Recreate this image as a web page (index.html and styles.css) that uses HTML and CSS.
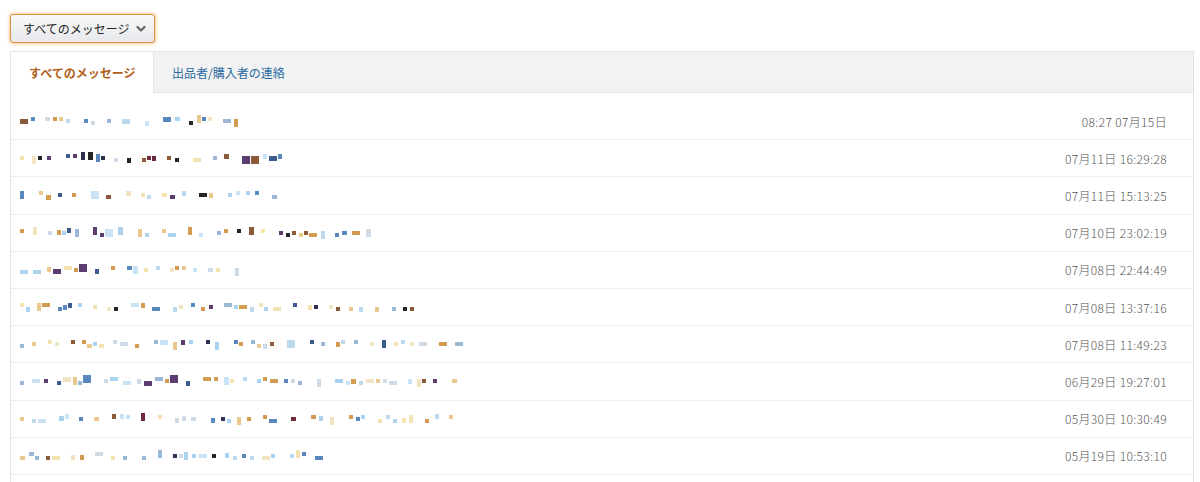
FILE: index.html
```html
<!DOCTYPE html>
<html lang="ja">
<head>
<meta charset="utf-8">
<link rel="stylesheet" href="styles.css">
</head>
<body>
<div class="page">
  <div class="toolbar">
    <button class="select-btn"><span class="select-label">すべてのメッセージ</span><svg class="chev" width="10" height="8" viewBox="0 0 10 8"><path d="M1.5 2 L5 5.5 L8.5 2" fill="none" stroke="#666" stroke-width="2.2" stroke-linecap="round" stroke-linejoin="round"/></svg></button>
  </div>
  <div class="panel">
    <div class="tabs">
      <div class="tab active">すべてのメッセージ</div>
      <div class="tab">出品者/購入者の連絡</div>
    </div>
    <div class="list">
      <div class="row"><div class="msg" data-w="230" data-seed="1"></div><div class="date">08:27 07月15日</div></div>
      <div class="row"><div class="msg" data-w="270" data-seed="2" data-dark="1"></div><div class="date">07月11日 16:29:28</div></div>
      <div class="row"><div class="msg" data-w="258" data-seed="3"></div><div class="date">07月11日 15:13:25</div></div>
      <div class="row"><div class="msg" data-w="355" data-seed="4"></div><div class="date">07月10日 23:02:19</div></div>
      <div class="row"><div class="msg" data-w="228" data-seed="5"></div><div class="date">07月08日 22:44:49</div></div>
      <div class="row"><div class="msg" data-w="400" data-seed="6"></div><div class="date">07月08日 13:37:16</div></div>
      <div class="row"><div class="msg" data-w="448" data-seed="7"></div><div class="date">07月08日 11:49:23</div></div>
      <div class="row"><div class="msg" data-w="440" data-seed="8"></div><div class="date">06月29日 19:27:01</div></div>
      <div class="row"><div class="msg" data-w="440" data-seed="9"></div><div class="date">05月30日 10:30:49</div></div>
      <div class="row"><div class="msg" data-w="310" data-seed="10"></div><div class="date">05月19日 10:53:10</div></div>
    </div>
  </div>
</div>
<script src="script.js"></script>
</body>
</html>
```

FILE: styles.css
```css
* { box-sizing: border-box; }
html, body { margin: 0; padding: 0; background: #fff; }
body { font-family: "Noto Sans CJK JP", "Liberation Sans", sans-serif; color: #333; }
.page { padding: 14px 6px 0 10px; }
.toolbar { display: flex; margin-bottom: 8px; }
.select-btn {
  display: flex; align-items: center; gap: 7px;
  height: 29px; width: 145px; padding: 0 0 0 12px;
  font-family: inherit; font-size: 12px; color: #222;
  background: linear-gradient(#f8f9fa, #e6e8eb);
  border: 1px solid #e0913f; border-radius: 3px;
  box-shadow: 0 0 3px 1px rgba(236, 150, 60, 0.5);
}
.select-label { line-height: 1; }
.chev { margin-top: 1px; }
.panel { border: 1px solid #e3e3e3; border-bottom: none; height: 440px; }
.tabs { display: flex; height: 41px; background: #f2f2f2; border-bottom: 1px solid #e6e6e6; }
.tab { display: flex; align-items: center; padding: 0 18px; font-size: 12px; color: #2a6aa0; white-space: nowrap; }
.tab.active { background: #fff; color: #b0601a; font-weight: bold; width: 143px; height: 41px; margin-bottom: -1px; padding: 0 0 0 18px; border-right: 1px solid #e6e6e6; }
.list { padding-top: 10px; }
.row { display: flex; align-items: center; justify-content: space-between; height: 37.2px; border-bottom: 1px solid #eeeeee; padding: 0 26px 0 9px; }
.msg { display: flex; align-items: center; height: 12px; filter: blur(0.35px); }
.msg span { display: block; flex: none; }
.date { font-size: 12px; color: #555; font-weight: 300; letter-spacing: 0.35px; }
```

FILE: script.js
```js
(function(){
  var pal = ['#a9d3ee','#c7e3f5','#5a88be','#d39b52','#f4e2b0','#9bb8d6','#e9c98f','#cfdbe6','#bcd9ee','#f1e4c2'];
  var dark = ['#2e3150','#262626','#6e2c3a','#5b3d72','#3d5d8f','#8a5a3a'];
  document.querySelectorAll('.msg').forEach(function(m){
    var s = parseInt(m.dataset.seed,10)*9301+49297;
    function r(){ s = (s*9301+49297)%233280; return s/233280; }
    var W = parseInt(m.dataset.w,10), x = 0, isDark = m.dataset.dark, first = true;
    while (x < W) {
      var gap = r() < 0.6 ? Math.floor(r()*12)+4 : Math.floor(r()*3)+1;
      if (first) { gap = 0; first = false; }
      var w = r() < 0.75 ? 4 : (r() < 0.5 ? 5 : 8);
      if (x + gap + w > W) break;
      var sp = document.createElement('span');
      var c = (isDark && r() < 0.5) || r() < 0.18 ? dark[Math.floor(r()*dark.length)] : pal[Math.floor(r()*pal.length)];
      var h = r() < 0.7 ? 4 : (r() < 0.5 ? 8 : 5);
      sp.style.cssText = 'width:'+w+'px;height:'+h+'px;margin-left:'+gap+'px;background:'+c+';transform:translateY('+(Math.floor(r()*3)-1)*2+'px)';
      m.appendChild(sp);
      x += gap + w;
    }
  });
})();
```
